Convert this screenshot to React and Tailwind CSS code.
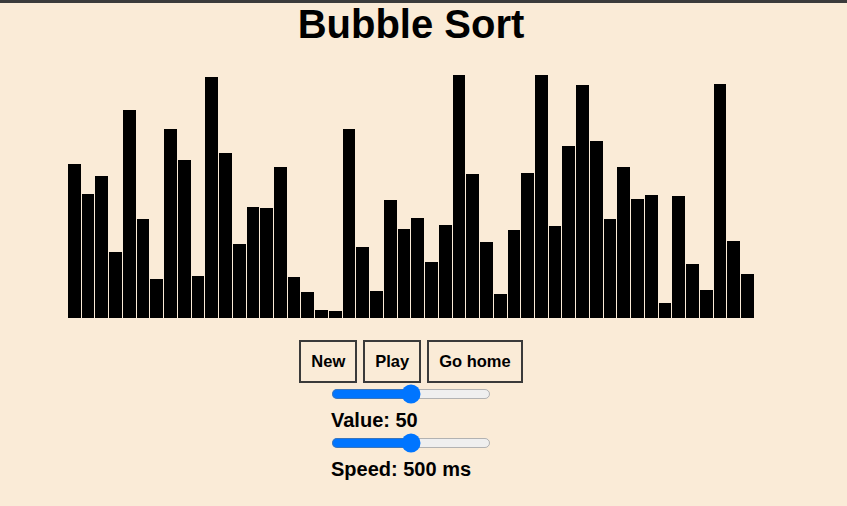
const heights = [
  154, 124, 142, 66, 208, 99, 39, 189, 158, 42,
  241, 165, 74, 111, 110, 151, 41, 26, 8, 7,
  189, 71, 27, 118, 89, 100, 56, 93, 243, 144,
  76, 24, 88, 145, 243, 92, 172, 233, 177, 99,
  151, 119, 123, 15, 122, 54, 28, 234, 77, 44
];

const buttons = ['New', 'Play', 'Go home'];

// native range, blown up the way the page was at 125%
const Slider = () => (
  <div className="flex h-[20px] w-[160px] items-center">
    <input type="range" min="0" max="100" defaultValue="50" className="w-[128px] [zoom:1.25]" />
  </div>
);

export default function App() {
  return (
    <div className="min-h-screen bg-[#faebd7] text-black font-['Liberation_Sans',Arial,sans-serif]">
      <div className="h-[3px] bg-[#3b3b3b]" />
      <div className="flex w-[822px] flex-col items-center">
        <h1 className="mt-[1px] text-[40px] font-bold leading-[40px]">Bubble Sort</h1>

        <div className="flex h-[274px] w-[686px] items-end gap-[1px]">
          {heights.map((h, i) => (
            <div key={i} className="flex-1 bg-black" style={{ height: h }} />
          ))}
        </div>

        <div className="mt-[22px] flex gap-[6px]">
          {buttons.map((label) => (
            <button
              key={label}
              type="button"
              className="border-2 border-[#3a3a3a] px-[10px] py-[10px] text-[16.5px] font-bold leading-[19px]"
            >
              {label}
            </button>
          ))}
        </div>

        <div className="mt-[1px] flex w-[160px] flex-col">
          <Slider />
          <p className="mt-[5px] text-[20px] font-bold leading-[23px]">Value: 50</p>
          <div className="mt-[1px]">
            <Slider />
          </div>
          <p className="mt-[5px] text-[20px] font-bold leading-[23px]">Speed: 500 ms</p>
        </div>
      </div>
    </div>
  );
}
